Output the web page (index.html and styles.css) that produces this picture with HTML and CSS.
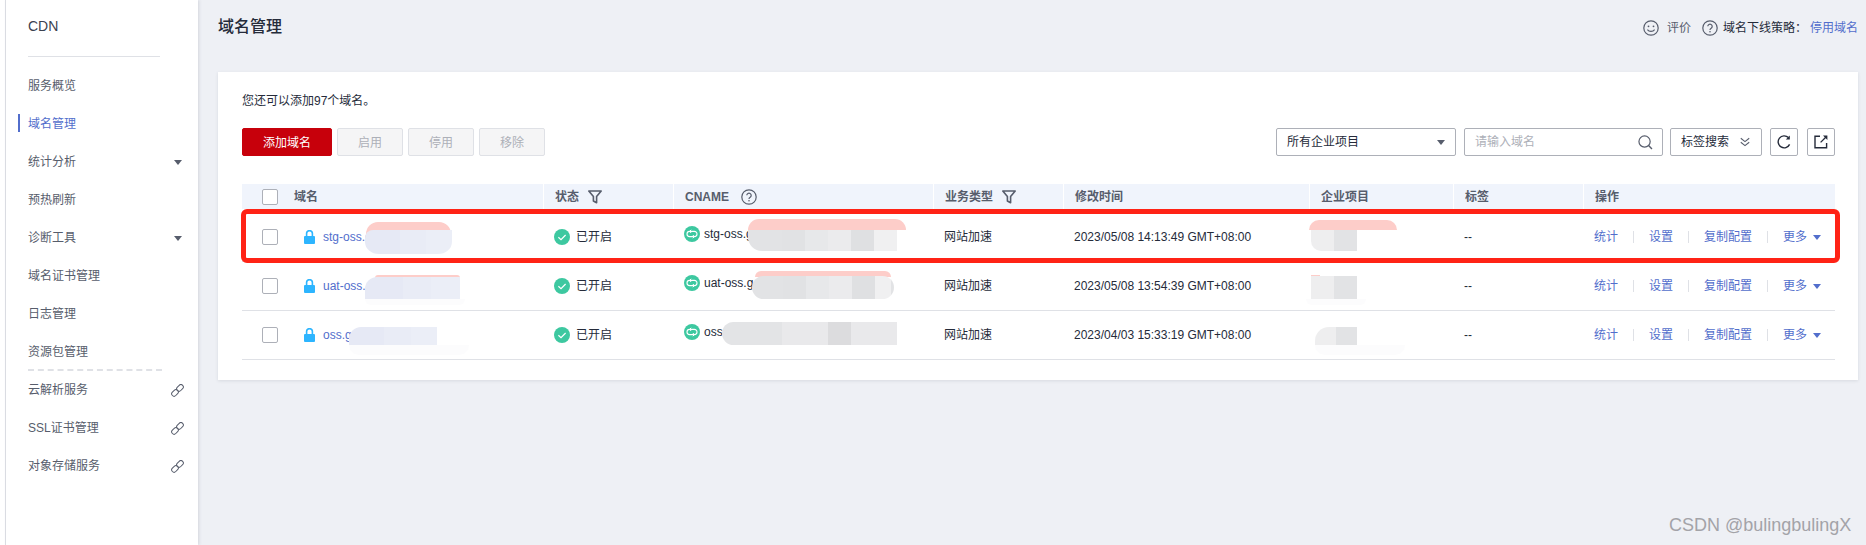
FILE: index.html
```html
<!DOCTYPE html>
<html lang="zh-CN">
<head>
<meta charset="utf-8">
<title>域名管理</title>
<link rel="stylesheet" href="styles.css">
</head>
<body>
<svg class="defs" aria-hidden="true">
  <defs>
    <symbol id="i-lock" viewBox="0 0 11 14"><path d="M2.6 6V3.6a2.9 2.9 0 0 1 5.8 0V6" fill="none" stroke="#2db5ff" stroke-width="1.6"/><path d="M1 6h9a1 1 0 0 1 1 1v6a1 1 0 0 1-1 1H1a1 1 0 0 1-1-1V7a1 1 0 0 1 1-1z" fill="#2db5ff"/></symbol>
    <symbol id="i-check" viewBox="0 0 16 16"><circle cx="8" cy="8" r="8" fill="#3dc8a0"/><path d="M4.4 8.2l2.6 2.4 4.6-4.6" fill="none" stroke="#fff" stroke-width="1.2"/></symbol>
    <symbol id="i-cname" viewBox="0 0 16 16"><circle cx="8" cy="8" r="8" fill="#3dc8a0"/><path d="M6 5.4h4.4a2.6 2.6 0 0 1 0 5.2H9M10 10.6H5.6a2.6 2.6 0 0 1 0-5.2H7" fill="none" stroke="#fff" stroke-width="1.1"/><path d="M7.2 3.8L5.6 5.4l1.6 1.6M8.8 9l1.6 1.6-1.6 1.6" fill="none" stroke="#fff" stroke-width="1"/></symbol>
    <symbol id="i-filter" viewBox="0 0 14 14"><path d="M.8 1h12.4L8.6 6.6v6.2L5.4 11V6.6z" fill="none" stroke="#575d6c" stroke-width="1.6" stroke-linejoin="round"/></symbol>
    <symbol id="i-help" viewBox="0 0 16 16"><circle cx="8" cy="8" r="7.2" fill="none" stroke="#575d6c" stroke-width="1.2"/><path d="M5.8 6.3a2.2 2.2 0 1 1 3.4 1.9c-.8.5-1.2.9-1.2 1.7" fill="none" stroke="#575d6c" stroke-width="1.2"/><circle cx="8" cy="11.7" r=".8" fill="#575d6c"/></symbol>
    <symbol id="i-smile" viewBox="0 0 16 16"><circle cx="8" cy="8" r="7.2" fill="none" stroke="#575d6c" stroke-width="1.2"/><circle cx="5.5" cy="6.3" r=".9" fill="#575d6c"/><circle cx="10.5" cy="6.3" r=".9" fill="#575d6c"/><path d="M4.4 9.6c1.6 2.4 5.6 2.4 7.2 0" fill="none" stroke="#575d6c" stroke-width="1.1"/></symbol>
    <symbol id="i-search" viewBox="0 0 16 16"><circle cx="7" cy="7" r="6" fill="none" stroke="#575d6c" stroke-width="1.3"/><path d="M11.3 11.3l3.6 3.6" stroke="#575d6c" stroke-width="1.5"/></symbol>
    <symbol id="i-chev" viewBox="0 0 10 10"><path d="M.8 1.2L5 4.6l4.2-3.4M.8 5.2L5 8.6l4.2-3.4" fill="none" stroke="#575d6c" stroke-width="1.1"/></symbol>
    <symbol id="i-refresh" viewBox="0 0 14 14"><path d="M12.6 9.4A6 6 0 1 1 11.4 2.6" fill="none" stroke="#252b3a" stroke-width="1.4"/><path d="M12.8.6v4H8.8z" fill="#252b3a"/></symbol>
    <symbol id="i-export" viewBox="0 0 14 14"><path d="M6 1.2H1v11.6h11.6V8" fill="none" stroke="#252b3a" stroke-width="1.4"/><path d="M6.6 7.4L12 2" stroke="#252b3a" stroke-width="1.3"/><path d="M9 .6h4.4V5z" fill="#252b3a"/></symbol>
    <symbol id="i-link" viewBox="0 0 13 13"><g fill="none" stroke="#575d6c" stroke-width="1"><rect x="6.6" y=".2" width="4.8" height="7.4" rx="2.4" transform="rotate(45 9 3.9)" /><rect x="1.6" y="5.2" width="4.8" height="7.4" rx="2.4" transform="rotate(45 4 8.9)" /></g></symbol>
  </defs>
</svg>
<div class="app">
  <div class="edge"></div>
  <aside class="sidebar">
    <div class="brand">CDN</div>
    <nav class="nav">
      <a class="nav-item">服务概览</a>
      <a class="nav-item active">域名管理</a>
      <a class="nav-item">统计分析<i class="caret"></i></a>
      <a class="nav-item">预热刷新</a>
      <a class="nav-item">诊断工具<i class="caret"></i></a>
      <a class="nav-item">域名证书管理</a>
      <a class="nav-item">日志管理</a>
      <a class="nav-item">资源包管理</a>
      <div class="nav-sep"></div>
      <a class="nav-item">云解析服务<svg class="ic-link"><use href="#i-link"/></svg></a>
      <a class="nav-item">SSL证书管理<svg class="ic-link"><use href="#i-link"/></svg></a>
      <a class="nav-item">对象存储服务<svg class="ic-link"><use href="#i-link"/></svg></a>
    </nav>
  </aside>
  <main class="main">
    <header class="topbar">
      <h1 class="title">域名管理</h1>
      <div class="top-links">
        <svg class="ic16"><use href="#i-smile"/></svg>
        <span class="rate">评价</span>
        <svg class="ic16 help-top"><use href="#i-help"/></svg>
        <span class="policy">域名下线策略：</span>
        <a class="link">停用域名</a>
      </div>
    </header>
    <section class="card">
      <p class="note">您还可以添加97个域名。</p>
      <div class="toolbar">
        <button class="btn primary">添加域名</button>
        <button class="btn">启用</button>
        <button class="btn">停用</button>
        <button class="btn">移除</button>
        <div class="tools">
          <div class="field select">所有企业项目<i class="caret"></i></div>
          <div class="field search"><span>请输入域名</span><svg class="ic15"><use href="#i-search"/></svg></div>
          <div class="field tag">标签搜索<svg class="ic10"><use href="#i-chev"/></svg></div>
          <div class="field square"><svg class="ic14"><use href="#i-refresh"/></svg></div>
          <div class="field square"><svg class="ic14"><use href="#i-export"/></svg></div>
        </div>
      </div>
      <div class="table">
        <div class="row head">
          <div class="cell first"><span class="check"></span><span class="h-name">域名</span></div>
          <div class="cell">状态<svg class="ic14 after"><use href="#i-filter"/></svg></div>
          <div class="cell">CNAME<svg class="ic16 after-wide"><use href="#i-help"/></svg></div>
          <div class="cell">业务类型<svg class="ic14 after"><use href="#i-filter"/></svg></div>
          <div class="cell">修改时间</div>
          <div class="cell">企业项目</div>
          <div class="cell">标签</div>
          <div class="cell">操作</div>
        </div>

        <div class="row">
          <div class="cell first"><span class="check"></span><svg class="ic-lock"><use href="#i-lock"/></svg><a class="link">stg-oss.g</a></div>
          <div class="cell"><svg class="ic16 lead"><use href="#i-check"/></svg>已开启</div>
          <div class="cell raised"><svg class="ic16 lead-sm"><use href="#i-cname"/></svg>stg-oss.g</div>
          <div class="cell">网站加速</div>
          <div class="cell">2023/05/08 14:13:49 GMT+08:00</div>
          <div class="cell"></div>
          <div class="cell">--</div>
          <div class="cell ops"><a class="link">统计</a><a class="link">设置</a><a class="link">复制配置</a><a class="link more">更多<i class="caret blue"></i></a></div>
          <i class="blob pink p-d1"></i><i class="blob dom d1"></i>
          <i class="blob pink p-c1"></i><i class="blob cn c1"></i>
          <i class="blob pink p-e1"></i><i class="blob ent e1"></i>
        </div>

        <div class="row">
          <div class="cell first"><span class="check"></span><svg class="ic-lock"><use href="#i-lock"/></svg><a class="link">uat-oss.g</a></div>
          <div class="cell"><svg class="ic16 lead"><use href="#i-check"/></svg>已开启</div>
          <div class="cell raised"><svg class="ic16 lead-sm"><use href="#i-cname"/></svg>uat-oss.g<span class="tail">.</span></div>
          <div class="cell">网站加速</div>
          <div class="cell">2023/05/08 13:54:39 GMT+08:00</div>
          <div class="cell"></div>
          <div class="cell">--</div>
          <div class="cell ops"><a class="link">统计</a><a class="link">设置</a><a class="link">复制配置</a><a class="link more">更多<i class="caret blue"></i></a></div>
          <i class="blob pink p-d2"></i><i class="blob dom d2"></i>
          <i class="blob pink p-c2"></i><i class="blob cn c2"></i>
          <i class="blob pink p-e2"></i><i class="blob ent e2"></i>
          <i class="blob ghost g-d2"></i><i class="blob ghost g-e2"></i>
        </div>

        <div class="row">
          <div class="cell first"><span class="check"></span><svg class="ic-lock"><use href="#i-lock"/></svg><a class="link">oss.g</a></div>
          <div class="cell"><svg class="ic16 lead"><use href="#i-check"/></svg>已开启</div>
          <div class="cell raised"><svg class="ic16 lead-sm"><use href="#i-cname"/></svg>oss</div>
          <div class="cell">网站加速</div>
          <div class="cell">2023/04/03 15:33:19 GMT+08:00</div>
          <div class="cell"></div>
          <div class="cell">--</div>
          <div class="cell ops"><a class="link">统计</a><a class="link">设置</a><a class="link">复制配置</a><a class="link more">更多<i class="caret blue"></i></a></div>
          <i class="blob dom d3"></i>
          <i class="blob cn c3"></i>
          <i class="blob ent e3"></i>
          <i class="blob ghost g-d3"></i><i class="blob ghost g-e3"></i>
        </div>
        <div class="highlight"></div>
      </div>
    </section>
  </main>
</div>
<div class="watermark">CSDN @bulingbulingX</div>
</body>
</html>
```
FILE: styles.css
```css
* { box-sizing: border-box; }
html, body { margin: 0; height: 100%; }
body {
  position: relative;
  overflow: hidden;
  background: #eef0f5;
  color: #252b3a;
  font: 12px/16px "Liberation Sans", "Noto Sans CJK SC", sans-serif;
}
.defs { position: absolute; width: 0; height: 0; }
.app { display: flex; height: 545px; }
.edge { width: 6px; flex: none; background: #fff; border-right: 1px solid #dfe1e6; }

/* sidebar */
.sidebar { width: 192px; flex: none; background: #fff; box-shadow: 1px 0 3px rgba(87, 93, 108, .18); }
.brand { height: 57px; margin: 0 38px 0 22px; padding-top: 18px; font-size: 14px; border-bottom: 1px solid #dfe1e6; color: #3b4150; }
.nav { padding-top: 9px; display: flex; flex-direction: column; }
.nav-item { height: 38px; padding: 2px 13px 0 22px; display: flex; align-items: center; justify-content: space-between; color: #575d6c; position: relative; }
.nav-item.active { color: #526ecc; }
.nav-item.active::before { content: ""; position: absolute; left: 12px; top: 10px; width: 2px; height: 18px; background: #526ecc; }
.nav-sep { height: 2px; margin: -1px 36px -1px 22px; border-top: 2px dashed #dfe1e6; }
.caret { width: 0; height: 0; border: 4px solid transparent; border-top: 5px solid #575d6c; border-bottom: 0; display: block; }
.nav-item .caret { margin-right: 3px; }
.ic-link { width: 13px; height: 13px; margin-right: 1px; }

/* main */
.main { flex: 1; padding: 0 8px 0 20px; min-width: 0; }
.topbar { height: 72px; display: flex; justify-content: space-between; padding-top: 18px; align-items: flex-start; }
.title { margin: 0; font-size: 16px; line-height: 18px; font-weight: 500; color: #252b3a; }
.top-links { display: flex; align-items: center; height: 20px; }
.rate { margin: 0 11px 0 8px; color: #575d6c; }
.help-top { margin-right: 5px; }
.policy { width: 87px; white-space: nowrap; }
.link { color: #526ecc; text-decoration: none; }
.ic16 { width: 16px; height: 16px; flex: none; }
.ic15 { width: 15px; height: 15px; flex: none; }
.ic14 { width: 14px; height: 14px; flex: none; }
.ic10 { width: 10px; height: 10px; flex: none; }

.card { height: 308px; background: #fff; padding: 21px 23px 0 24px; box-shadow: 0 1px 3px rgba(87, 93, 108, .15); }
.note { margin: 0 0 19px; }

/* toolbar */
.toolbar { height: 28px; display: flex; gap: 5px; margin-bottom: 28px; }
.btn { width: 66px; height: 28px; padding: 2px 0 0; font: inherit; background: #f5f5f6; border: 1px solid #dfe1e6; border-radius: 2px; color: #adb0b8; }
.btn.primary { width: 90px; background: #c7000b; border-color: #c7000b; color: #fff; }
.tools { margin-left: auto; display: flex; }
.field { height: 28px; border: 1px solid #adb0b8; border-radius: 2px; display: flex; align-items: center; justify-content: space-between; background: #fff; }
.select { width: 180px; padding: 0 10px; margin-right: 8px; }
.search { width: 199px; padding: 0 9px 0 10px; color: #adb0b8; margin-right: 7px; }
.tag { width: 92px; padding: 0 11px 0 10px; margin-right: 8px; }
.square { width: 28px; justify-content: center; margin-right: 9px; }
.square:last-child { margin-right: 0; }

/* table */
.table { position: relative; }
.row {
  position: relative;
  display: grid;
  grid-template-columns: 301px 130px 260px 130px 246px 144px 130px 252px;
  height: 49px;
  border-bottom: 1px solid #dfe1e6;
}
.cell { display: flex; align-items: center; padding-left: 11px; white-space: nowrap; min-width: 0; }
.cell.first { padding-left: 20px; }
.head { height: 29px; border: 0; background: linear-gradient(#f0f4fc 25px, #fff 25px); font-weight: 700; color: #575d6c; }
.head .cell { height: 25px; border-left: 1px solid #fff; }
.head .cell.first { border: 0; }
.check { width: 16px; height: 16px; flex: none; border: 1px solid #adb0b8; border-radius: 2px; background: #fff; }
.h-name { margin-left: 16px; }
.ic-lock { width: 11px; height: 14px; margin: 0 8px 0 26px; flex: none; }
.after { margin-left: 9px; }
.after-wide { margin-left: 12px; }
.lead { margin-right: 6px; }
.lead-sm { margin-right: 4px; }
.raised { padding-bottom: 6px; }
.tail { margin-left: 137px; }
.ops { gap: 0; }
.ops .link { padding: 0 15px; line-height: 12px; border-right: 1px solid #dfe1e6; }
.ops .link:first-child { padding-left: 0; }
.ops .more { border: 0; display: flex; align-items: center; }
.caret.blue { border-top-color: #526ecc; margin-left: 6px; }

/* redaction blobs — pinned over the cells they hide */
.blob { position: absolute; display: block; }
.pink { background: #fdcdc9; }
.dom { background: linear-gradient(90deg, #e6e9f5 0 40%, #e9ecf6 40% 70%, #ebeef7 70%); }
.cn { background: linear-gradient(90deg, #e2e3e5 0 34px, #e1e2e4 34px 57px, #e7e8ea 57px 80px, #ebebed 80px 103px, #dfe0e2 103px 126px, #f0f0f1 126px); }
.ent { background: linear-gradient(90deg, #eeeeef 0 50%, #e2e3e5 50%); }
.ghost { background: #fcfcfd; }

.p-d1 { left: 124px; top: 9px; width: 85px; height: 12px; border-radius: 14px 14px 0 0; }
.d1 { left: 123px; top: 17px; width: 87px; height: 24px; border-radius: 8px 0 14px 14px / 8px 0 12px 12px; }
.p-c1 { left: 506px; top: 6px; width: 158px; height: 11px; border-radius: 16px 16px 0 0; }
.c1 { left: 506px; top: 17px; width: 149px; height: 21px; border-radius: 0 0 0 14px; }
.p-e1 { left: 1067px; top: 7px; width: 88px; height: 10px; border-radius: 14px 14px 0 0; }
.e1 { left: 1069px; top: 17px; width: 46px; height: 21px; border-radius: 0 0 0 10px; }

.p-d2 { left: 133px; top: 13px; width: 85px; height: 3px; border-radius: 4px 4px 0 0; }
.d2 { left: 123px; top: 15px; width: 95px; height: 22px; border-radius: 12px 0 0 0; }
.p-c2 { left: 513px; top: 9px; width: 136px; height: 6px; border-radius: 10px 10px 0 0; }
.c2 { left: 510px; top: 14px; width: 142px; height: 23px; border-radius: 14px; background-position: -3px 0; }
.p-e2 { left: 1069px; top: 13px; width: 9px; height: 2px; }
.e2 { left: 1069px; top: 14px; width: 46px; height: 23px; }
.g-d2 { left: 123px; top: 37px; width: 100px; height: 6px; border-radius: 0 0 12px 12px; }
.g-e2 { left: 1064px; top: 37px; width: 60px; height: 6px; border-radius: 0 0 12px 12px; }

.d3 { left: 107px; top: 16px; width: 88px; height: 18px; border-radius: 12px 0 0 0; }
.c3 { left: 480px; top: 11px; width: 175px; height: 23px; border-radius: 14px 0 0 14px; background: linear-gradient(90deg, #e3e4e6 0 60px, #e9e9eb 60px 106px, #dcdcde 106px 129px, #e9e9eb 129px); }
.e3 { left: 1073px; top: 16px; width: 42px; height: 18px; border-radius: 14px 0 0 0; }
.g-d3 { left: 107px; top: 34px; width: 120px; height: 10px; border-radius: 0 0 14px 14px; }
.g-e3 { left: 1073px; top: 34px; width: 90px; height: 10px; border-radius: 0 0 14px 14px; }

/* red annotation drawn over the first row */
.highlight { position: absolute; left: -1px; top: 25px; width: 1599px; height: 54px; border: 5px solid #ff2316; border-radius: 6px; pointer-events: none; }

.watermark { position: absolute; left: 1669px; top: 515px; font-size: 18px; line-height: 20px; color: #a3a3a8; white-space: nowrap; }
```
